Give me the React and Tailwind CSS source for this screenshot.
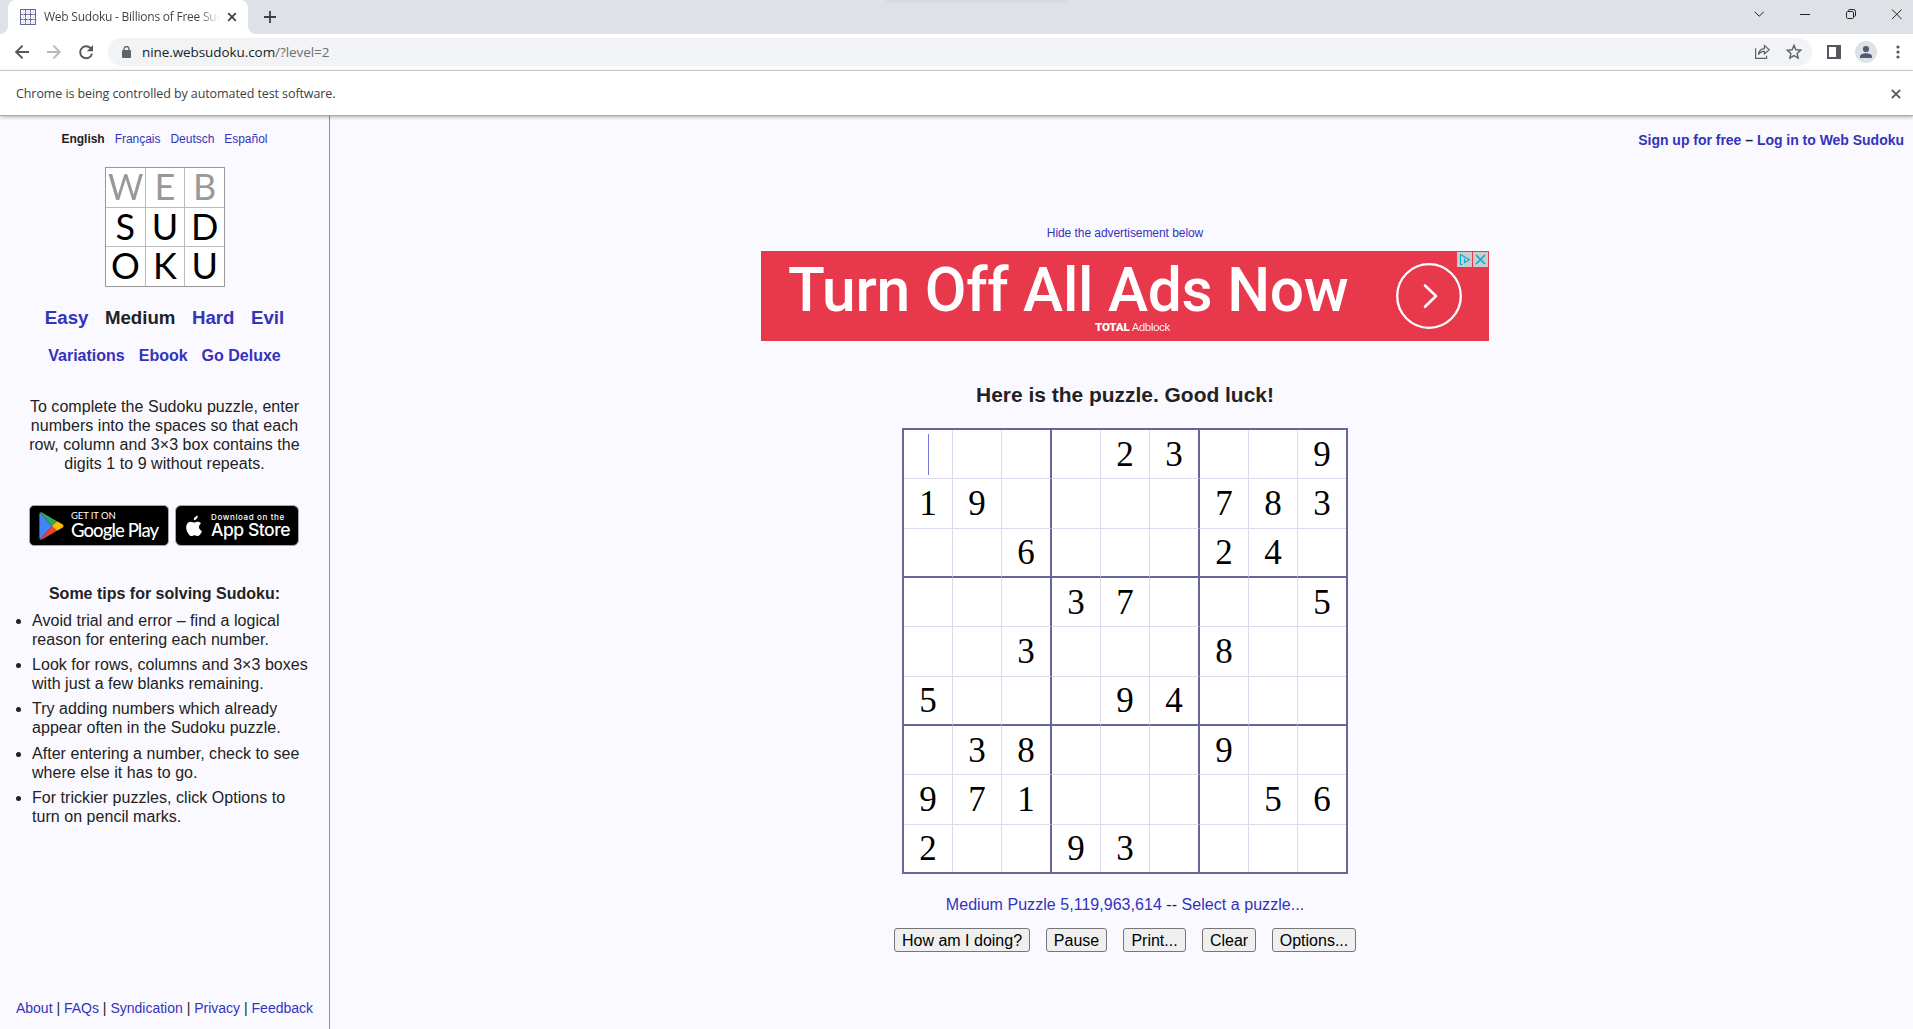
import React from "react";

const BLUE = "text-[#3333bb]";

const PUZZLE = [
  "    23  9",
  "19    783",
  "  6   24 ",
  "   37   5",
  "  3   8  ",
  "5   94   ",
  " 38   9  ",
  "971    56",
  "2  93    ",
];

const TIPS = [
  ["Avoid trial and error – find a logical", "reason for entering each number."],
  ["Look for rows, columns and 3×3 boxes", "with just a few blanks remaining."],
  ["Try adding numbers which already", "appear often in the Sudoku puzzle."],
  ["After entering a number, check to see", "where else it has to go."],
  ["For trickier puzzles, click Options to", "turn on pencil marks."],
];

function Favicon() {
  return (
    <svg width="16" height="16" viewBox="0 0 16 16" fill="none" shapeRendering="crispEdges">
      <rect x="0.5" y="0.5" width="15" height="15" fill="#fff" stroke="#666699" />
      <path d="M5.5 0v16M10.5 0v16M0 5.5h16M0 10.5h16" stroke="#666699" />
      <path d="M3 1v14M8 1v14M13 1v14M1 3h14M1 8h14M1 13h14" stroke="#dcdcec" strokeWidth="0.7" />
    </svg>
  );
}

function TabStrip() {
  return (
    <div className="relative flex h-[34px] bg-[#dee1e6] pl-2">
      <div className="absolute left-[885px] top-0 h-[3px] w-[184px] rounded-b-full bg-[#d9dce1]" />
      <div className="relative flex h-[34px] w-[240px] items-center rounded-t-lg bg-white pl-3">
        <svg className="absolute -left-2 bottom-0" width="8" height="8">
          <path d="M8 0v8H0a8 8 0 0 0 8-8z" fill="#fff" />
        </svg>
        <svg className="absolute -right-2 bottom-0" width="8" height="8">
          <path d="M0 0v8h8a8 8 0 0 1-8-8z" fill="#fff" />
        </svg>
        <Favicon />
        <div className="ml-2 w-[176px] overflow-hidden whitespace-nowrap bg-linear-to-r from-[#3c4043] from-88% to-transparent bg-clip-text font-['Open_Sans','Noto_Sans',sans-serif] text-[12px] leading-[18px] tracking-[-0.23px] text-transparent">
          Web Sudoku - Billions of Free Sudoku
        </div>
        <svg className="ml-[7px]" width="10" height="10" viewBox="0 0 10 10">
          <path d="M1.2 1.2l7.6 7.6M8.8 1.2L1.2 8.8" stroke="#3c4043" strokeWidth="1.7" />
        </svg>
      </div>
      <svg className="ml-4 mt-[11px]" width="12" height="12" viewBox="0 0 12 12">
        <path d="M6 0v12M0 6h12" stroke="#3c4043" strokeWidth="1.8" />
      </svg>
      <div className="ml-auto flex pr-[11px] pt-[9px]">
        <svg width="148" height="12" viewBox="0 0 148 12" fill="none" stroke="#222" strokeWidth="1">
          <path d="M0.6 2.8l4.6 4.4 4.6-4.4" />
          <path d="M46 5.5h10" />
          <rect x="92.5" y="2.5" width="7" height="7" rx="1.2" />
          <path d="M94.6 2.5V1.5q0-1 1-1h3.900q2 0 2 2v3.900q0 .9-1 .9h-1" />
          <path d="M138 0.5l9.600 9.600M147.600 0.5L138 10.100" />
        </svg>
      </div>
    </div>
  );
}

function Toolbar() {
  return (
    <div className="flex h-[37px] items-center border-b border-[#d5d6d9] bg-white pl-[15px] pb-px">
      <svg width="80" height="16" viewBox="0 0 80 16" fill="none" strokeWidth="1.9">
        <path d="M14 8H1.5M7.6 1.6L1.2 8l6.4 6.4" stroke="#54575b" />
        <path d="M32 8h12.700M38.400 1.600L44.800 8l-6.400 6.400" stroke="#b8babd" />
        <path d="M75.600 4.200A6 6 0 1 0 77 9.600" stroke="#54575b" />
        <path d="M78 1v6.200h-6.200z" fill="#54575b" />
      </svg>
      <div className="ml-[13px] flex h-7 w-[1704px] items-center rounded-full bg-[#f1f3f4] pl-[14px] pr-[10px]">
        <svg width="9" height="12" viewBox="0 0 9 12">
          <rect x="0" y="4" width="9" height="8" rx="1" fill="#5f6368" />
          <path d="M2 4.6V3a2.5 2.5 0 0 1 5 0v1.6" fill="none" stroke="#5f6368" strokeWidth="1.3" />
        </svg>
        <div className="ml-[11px] font-['Open_Sans','Noto_Sans',sans-serif] text-[13.5px] leading-5 tracking-[-0.08px] text-[#202124]">
          nine.websudoku.com<span className="text-[#6b6f74]">/?level=2</span>
        </div>
        <svg className="ml-auto" width="47" height="16" viewBox="0 0 47 16" fill="none" stroke="#5f6368" strokeWidth="1.2">
          <path d="M0.6 4.2v10.200h11v-2.600" />
          <path d="M3.4 10.600c.5-4 2.600-5.900 6-6V1.600l4.800 4.200-4.800 4.200V7.400c-2.600 0-4.600.9-6 3.200z" />
          <path d="M39 1.4l1.9 4.4 4.8.4-3.6 3.2 1.1 4.7L39 11.6l-4.2 2.5 1.1-4.7-3.6-3.2 4.8-.4z" strokeWidth="1.4" />
        </svg>
      </div>
      <svg className="ml-[15px]" width="14" height="14" viewBox="0 0 14 14">
        <path fillRule="evenodd" d="M0 0h14v14H0zM2 2v10h7V2z" fill="#54575b" />
      </svg>
      <svg className="ml-[14px]" width="22" height="22" viewBox="0 0 22 22">
        <circle cx="11" cy="11" r="11" fill="#dee1e6" />
        <circle cx="11" cy="8" r="3.1" fill="#525c70" />
        <path d="M5 17v-1.6c0-2.2 3.3-3.2 6-3.2s6 1 6 3.2V17z" fill="#525c70" />
      </svg>
      <svg className="ml-[19px]" width="4" height="14" viewBox="0 0 4 14" fill="#54575b">
        <circle cx="2" cy="2" r="1.6" />
        <circle cx="2" cy="7" r="1.6" />
        <circle cx="2" cy="12" r="1.6" />
      </svg>
    </div>
  );
}

function InfoBar() {
  return (
    <div className="relative z-10 flex h-[45px] items-center justify-between border-b border-[#a9a9ae] bg-white pl-4 pr-3 shadow-[0_1px_4px_rgba(0,0,0,0.3)]">
      <div className="pt-px font-['Open_Sans','Noto_Sans',sans-serif] text-[12.5px] leading-5 tracking-[-0.09px] text-[#3c4043]">
        Chrome is being controlled by automated test software.
      </div>
      <svg className="mt-px" width="10" height="10" viewBox="0 0 10 10">
        <path d="M0.8 0.8l8.4 8.4M9.2 0.8L0.8 9.2" stroke="#54575b" strokeWidth="1.8" />
      </svg>
    </div>
  );
}

function Logo() {
  const letters = [..."WEBSUDOKU"];
  return (
    <div className="grid h-[120px] w-[120px] grid-cols-3 grid-rows-3 gap-px border border-[#999] bg-[#bbb] font-['Lato',sans-serif] text-[36px] leading-[36px]">
      {letters.map((c, i) => (
        <div
          key={i}
          className={
            "flex min-w-0 items-center justify-center bg-white pb-[3px] " +
            (i < 3 ? "text-[#999]" : "text-black")
          }
        >
          <span className={i === 0 ? "inline-block scale-x-95" : ""}>{c}</span>
        </div>
      ))}
    </div>
  );
}

function GooglePlay() {
  return (
    <div className="flex h-[41px] w-[140px] items-center rounded-[5px] border border-[#a6a6a6] bg-black pl-[9px] text-white">
      <svg width="25" height="28" viewBox="0 0 25 28">
        <path d="M1.2.6C.6 1 .4 1.500.4 2.300v23.400c0 .8.2 1.300.8 1.700L13 14z" fill="#4285f4" />
        <path d="M1.200.6C1.800.2 2.600.3 3.400.7L18 9.200 13 14z" fill="#34a853" />
        <path d="M1.200 27.400c.6.4 1.400.3 2.200-.1L18 18.800 13 14z" fill="#ea4335" />
        <path d="M18 9.200l5.400 3.100c1.500.9 1.500 2.500 0 3.400L18 18.800 12.800 14z" fill="#fbbc04" />
      </svg>
      <div className="ml-[7px] font-['Lato',sans-serif]">
        <div className="text-[9.500px] font-normal leading-[10px] tracking-[-0.1px]">GET IT ON</div>
        <div className="-mt-px whitespace-nowrap text-[18.500px] font-medium leading-[20px] tracking-[-0.9px]">Google Play</div>
      </div>
    </div>
  );
}

function AppStore() {
  return (
    <div className="flex h-[41px] w-[124px] items-center rounded-[6px] border border-[#a6a6a6] bg-black pl-[9px] text-white">
      <svg width="19" height="24" viewBox="0 0 19 24" fill="#fff">
        <path d="M15.500 12.600c0-2.300 1.900-3.500 2-3.600-1.100-1.600-2.800-1.800-3.400-1.800-1.400-.2-2.800.8-3.500.8s-1.900-.8-3.100-.8C5.900 7.200 4.400 8.100 3.500 9.500c-1.700 2.900-.4 7.200 1.200 9.600.8 1.200 1.800 2.500 3.100 2.400 1.200 0 1.700-.8 3.200-.8s1.900.8 3.200.8 2.200-1.200 3-2.300c.9-1.400 1.300-2.700 1.300-2.700s-3-1.100-3-3.900z" transform="translate(-1.500 0.500)" />
        <path d="M13.200 5.500c.7-.8 1.100-1.900 1-3.100-1 0-2.200.6-2.900 1.500-.6.7-1.200 1.900-1 3 1.100.1 2.200-.6 2.900-1.400z" transform="translate(-1.500 -0.700)" />
      </svg>
      <div className="ml-[7px] whitespace-nowrap font-['Inter',sans-serif]">
        <div className="text-[8px] font-medium leading-[10px] tracking-[0.62px]">Download on the</div>
        <div className="-mt-px text-[17.500px] font-medium leading-[18px] tracking-[-0.450px]">App Store</div>
      </div>
    </div>
  );
}

function Sidebar() {
  return (
    <aside className="flex w-[330px] shrink-0 flex-col items-center border-r border-[#909096] text-[16px] leading-[19px]">
      <nav className={"mt-[15px] flex h-4 gap-[10px] text-[12px] leading-4 tracking-[-0.03px] " + BLUE}>
        <b className="text-[#222]">English</b>
        <a>Français</a>
        <a>Deutsch</a>
        <a>Español</a>
      </nav>
      <div className="mt-5 pl-px">
        <Logo />
      </div>
      <nav className={"mt-[19px] flex h-6 gap-[16.500px] text-[18.670px] font-bold leading-6 " + BLUE}>
        <a>Easy</a>
        <a className="text-[#222]">Medium</a>
        <a>Hard</a>
        <a>Evil</a>
      </nav>
      <nav className={"mt-4 flex h-5 gap-[14px] font-bold leading-5 " + BLUE}>
        <a>Variations</a>
        <a>Ebook</a>
        <a>Go Deluxe</a>
      </nav>
      <p className="mt-[31px] whitespace-nowrap text-center tracking-[0.04px]">
        To complete the Sudoku puzzle, enter
        <br />
        numbers into the spaces so that each
        <br />
        row, column and 3×3 box contains the
        <br />
        digits 1 to 9 without repeats.
      </p>
      <div className="mt-8 flex gap-[6px] pr-px">
        <GooglePlay />
        <AppStore />
      </div>
      <h2 className="mt-[38px] font-bold">Some tips for solving Sudoku:</h2>
      <ul className="mt-2 flex w-full list-disc flex-col gap-[6.200px] whitespace-nowrap pl-8 tracking-[0.04px]">
        {TIPS.map(([a, b]) => (
          <li key={a}>
            {a}
            <br />
            {b}
          </li>
        ))}
      </ul>
      <footer className={"mb-[12px] mt-auto whitespace-pre text-[14px] leading-[18px] " + BLUE}>
        About<i className="not-italic text-[#222]"> | </i>FAQs<i className="not-italic text-[#222]"> | </i>Syndication
        <i className="not-italic text-[#222]"> | </i>Privacy<i className="not-italic text-[#222]"> | </i>Feedback
      </footer>
    </aside>
  );
}

function Ad() {
  return (
    <div className="relative flex h-[90px] w-[728px] bg-[#e8384b] text-white">
      <div className="flex w-[728px] flex-col pl-[27px] font-['Roboto',sans-serif]">
        <div className="mt-[10px] whitespace-nowrap text-[60.500px] font-medium leading-[60px] tracking-[-0.28px]">Turn Off All Ads Now</div>
        <div className="flex gap-[2px] pl-[307px] text-[11.500px] leading-[12px]">
          <b className="font-black tracking-[-0.1px]">TOTAL</b>
          <span className="font-normal tracking-[-0.5px] opacity-90">Adblock</span>
        </div>
      </div>
      <svg className="absolute left-[635px] top-3" width="66" height="66" viewBox="0 0 66 66" fill="none" stroke="#fff">
        <circle cx="33" cy="33" r="31.800" strokeWidth="2.300" />
        <path d="M29 22.500L40 33 29 43.800" strokeWidth="2.600" strokeLinecap="round" strokeLinejoin="round" />
      </svg>
      <svg className="absolute right-px top-px" width="31" height="15" viewBox="0 0 31 15" fill="none" stroke="#00aecd">
        <path d="M0 0h15v15H0zM16 0h15v15H16z" fill="#ccc" stroke="none" />
        <path d="M5.500 12.500h-2v-10L12.500 7.700 7.500 10.500V6.500M7.500 4.700v.8" strokeWidth="1.100" />
        <path d="M19 3l9 9M28 3l-9 9" strokeWidth="1.600" />
      </svg>
    </div>
  );
}

function Cell({ value, row, col }) {
  const right = col === 8 ? "" : col % 3 === 2 ? " border-r-2 border-r-[#666699]" : " border-r border-r-[#dddaee]";
  const bottom = row === 8 ? "" : row % 3 === 2 ? " border-b-2 border-b-[#666699]" : " border-b border-b-[#dddaee]";
  const active = row === 0 && col === 0;
  const nudge = active ? " pt-px" : row % 3 === 0 ? " pt-[2px]" : "";
  return (
    <div className={"flex items-center justify-center bg-white" + right + bottom + nudge}>
      {active ? <span className="h-[41px] w-px bg-[#7777dd]" /> : value}
    </div>
  );
}

function Board() {
  return (
    <div className="grid grid-cols-[49px_49px_50px_49px_49px_50px_49px_49px_48px] grid-rows-[49px_50px_49px_49px_50px_49px_49px_50px_47px] border-2 border-[#666699] font-['Liberation_Serif',serif] text-[35px] leading-[40px] text-black">
      {PUZZLE.flatMap((line, r) =>
        [...line].map((v, c) => <Cell key={r + "-" + c} value={v === " " ? "" : v} row={r} col={c} />)
      )}
    </div>
  );
}

function Button({ children, className }) {
  return (
    <button className={"h-6 whitespace-nowrap rounded-[3px] border border-[#767676] bg-[#efefef] text-[16px] leading-[21px] text-black " + className}>
      {children}
    </button>
  );
}

function Main() {
  return (
    <main className="flex min-w-0 grow flex-col items-center pl-[7px]">
      <div className="mt-[14px] flex h-5 w-full justify-end pr-[9px] text-[14px] font-bold leading-5 tracking-[-0.02px]">
        <div className={BLUE}>
          Sign up for free <span className="text-[#222]">–</span> Log in to Web Sudoku
        </div>
      </div>
      <a className={"mt-[75px] h-4 text-[12px] leading-4 tracking-[-0.06px] " + BLUE}>Hide the advertisement below</a>
      <div className="mt-[10px]">
        <Ad />
      </div>
      <h1 className="mt-[42px] h-6 text-[20.950px] font-bold leading-6 text-[#222]">Here is the puzzle. Good luck!</h1>
      <div className="mt-[21px]">
        <Board />
      </div>
      <p className={"mt-[21px] h-5 text-[16px] leading-5 tracking-[0.04px] " + BLUE}>
        Medium Puzzle 5,119,963,614 <span className="text-[#222]">--</span> Select a puzzle...
      </p>
      <div className="mt-[13px] flex gap-4">
        <Button className="w-[136px]">How am I doing?</Button>
        <Button className="w-[61px]">Pause</Button>
        <Button className="w-[63px]">Print...</Button>
        <Button className="w-[54px]">Clear</Button>
        <Button className="w-[84px]">Options...</Button>
      </div>
    </main>
  );
}

export default function App() {
  return (
    <div className="flex h-[1029px] w-[1913px] flex-col overflow-hidden bg-[#faf9ff] font-['Liberation_Sans',sans-serif] text-[#222]">
      <TabStrip />
      <Toolbar />
      <InfoBar />
      <div className="flex min-h-0 grow">
        <Sidebar />
        <Main />
      </div>
    </div>
  );
}
